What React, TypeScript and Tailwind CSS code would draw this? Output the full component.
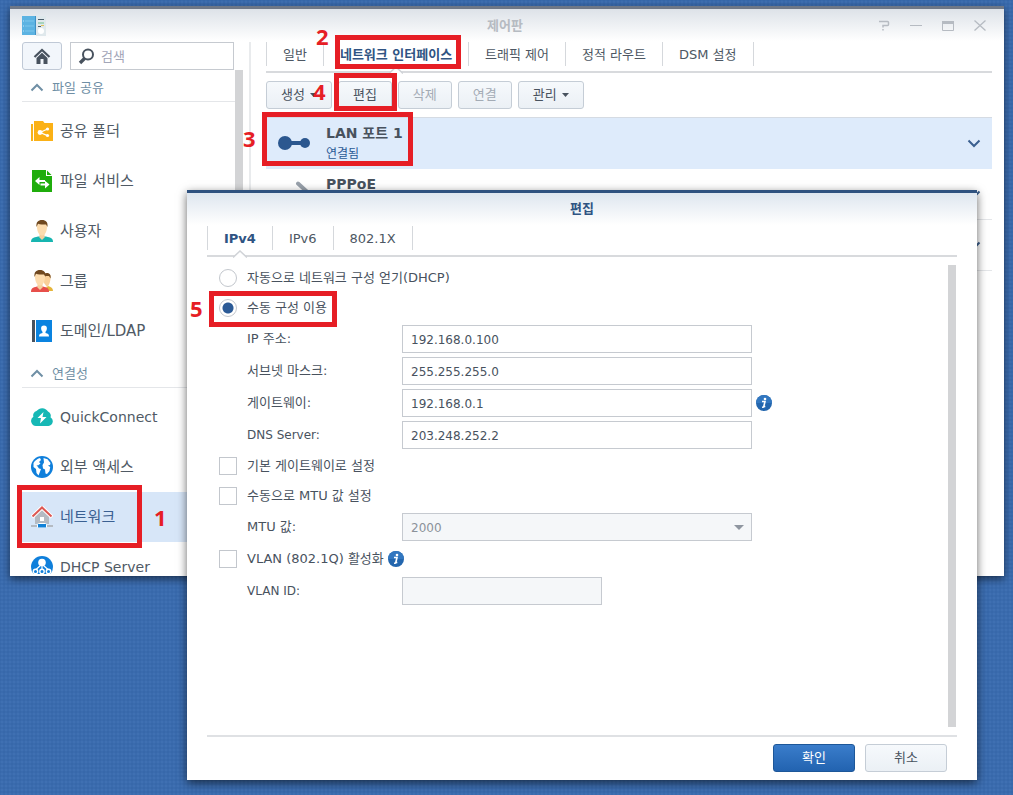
import { useState, type ReactNode } from "react";

/* ---------- icons ---------- */

function AppIcon() {
  return (
    <svg width="24" height="20" viewBox="0 0 24 20" aria-hidden="true">
      <rect x="14" y="0" width="10" height="20" fill="#dfe8ec" />
      <rect x="0" y="0" width="14" height="19" fill="#5cb3e2" />
      <rect x="13" y="0" width="1" height="19" fill="#3f90c4" />
      <path d="M3 5h9M3 10h9M3 15h9" stroke="#7cc6ec" />
      <path d="M1 5h1M1 10h1M1 15h1" stroke="#c5e8fa" />
      <path d="M16 3.500h6M16 10.500h3" stroke="#4a5d6b" />
      <path d="M16 7h6" stroke="#6fbf8f" />
      <path d="M19 9.500h3" stroke="#e2c25a" />
      <circle cx="19" cy="15" r="3" fill="#fff" />
    </svg>
  );
}

function HomeIcon() {
  return (
    <svg width="18" height="17" viewBox="0 0 18 17" aria-hidden="true">
      <path d="M1.500 9 9 2l7.500 7" fill="none" stroke="#48525e" strokeWidth="2.200" />
      <path d="M9 4.800 3.500 10v6H7.500v-5h3v5h4v-6z" fill="#48525e" />
    </svg>
  );
}

function SearchIcon() {
  return (
    <svg width="17" height="17" viewBox="0 0 17 17" aria-hidden="true">
      <circle cx="10" cy="6.500" r="5" fill="none" stroke="#48525e" strokeWidth="2" />
      <path d="M6.500 10.500 2 15" stroke="#48525e" strokeWidth="3.400" />
    </svg>
  );
}

function Chevron({ up = false, className = "" }: { up?: boolean; className?: string }) {
  return (
    <svg width="14" height="9" viewBox="0 0 14 9" className={className} aria-hidden="true">
      <path d={up ? "M1.500 7.500 7 2l5.500 5.500" : "M1.500 1.500 7 7l5.500-5.500"} fill="none" stroke="currentColor" strokeWidth="2" />
    </svg>
  );
}

function SharedFolderIcon() {
  return (
    <svg width="22" height="22" viewBox="0 0 22 22" aria-hidden="true">
      <path d="M0 4h2v17H0z" fill="#f6b21b" />
      <path d="M3 1h9l1.500 2H22v18H3z" fill="#fbb116" />
      <path d="M9 12.500 16.500 9M9 12.500l7.500 3.200" stroke="#fff" strokeWidth="1.300" />
      <circle cx="9" cy="12.500" r="2.400" fill="#fff" />
      <circle cx="16.500" cy="9" r="1.600" fill="#fff" />
      <circle cx="16.500" cy="15.500" r="1.600" fill="#fff" />
    </svg>
  );
}

function FileServiceIcon() {
  return (
    <svg width="22" height="22" viewBox="0 0 22 22" aria-hidden="true">
      <path d="M1 0h14v6h6v16H1z" fill="#1fad0c" />
      <path d="M16 0.500 20.500 5H16z" fill="#1fad0c" />
      <path d="M4 11l4.500-4v3H14v2H8.500v3zM18.500 14.500 14 10.800v2.700H9.500v2H14v3z" fill="#fff" />
    </svg>
  );
}

function UserIcon() {
  return (
    <svg width="22" height="22" viewBox="0 0 22 22" aria-hidden="true">
      <path d="M0 22c0-3.500 2-4.500 7-5.500h8c5 1 7 2 7 5.500z" fill="#17b5b0" />
      <path d="M8.500 13h5v4.500L11 20l-2.500-2.500z" fill="#f6cf9d" />
      <path d="M6 4h10c.6 6-1.500 11.500-5 11.500S5.400 10 6 4z" fill="#fddcae" />
      <path d="M5.500 7C5 2 7 0 11 0s6 2 5.500 7L15 4.500c-3 0-6 0-8-.8z" fill="#70481f" />
    </svg>
  );
}

function GroupIcon() {
  return (
    <svg width="22" height="22" viewBox="0 0 22 22" aria-hidden="true">
      <path d="M15 21c0-3 0-4 2-5 3 .8 5 2 5 5z" fill="#e5b53a" />
      <path d="M13 5h6.500c.5 5-1 10.500-3.500 12L13 13z" fill="#f9cf98" />
      <path d="M13 3.500c4-1.500 7.500 0 6.500 5l-1.500-2.500h-4z" fill="#70481f" />
      <path d="M0 22c0-3.500 1.500-4.500 6-5.500h6c4.500 1 6 2 6 5.500z" fill="#e74f4b" />
      <path d="M6.500 13h5v4.500L9 20l-2.500-2.500z" fill="#f6cf9d" />
      <path d="M4 4h10c.6 6-1.500 11.500-5 11.500S3.400 10 4 4z" fill="#fddcae" />
      <path d="M3.500 7C3 2 5 0 9 0s6 2 5.500 7L13 4.500c-3 0-6 0-8-.8z" fill="#70481f" />
    </svg>
  );
}

function DomainIcon() {
  return (
    <svg width="22" height="22" viewBox="0 0 22 22" aria-hidden="true">
      <path d="M1 0h3v22H1z" fill="#48525e" />
      <path d="M5 0h16v22H5z" fill="#0a83e0" />
      <path d="M13 5.500c2 0 3 1.200 2.900 3-.1 1.600-.7 2.700-1.400 3.300v1.300c2.400.5 3.500 1 3.500 3.400H8c0-2.400 1.100-2.900 3.500-3.400v-1.300c-.7-.6-1.300-1.700-1.400-3.300-.1-1.800.9-3 2.900-3z" fill="#fff" />
    </svg>
  );
}

function QuickConnectIcon() {
  return (
    <svg width="22" height="18" viewBox="0 0 22 18" aria-hidden="true">
      <path d="M5 18a5 5 0 0 1-2.600-9.200A4.500 4.500 0 0 1 5.500 3 7 7 0 0 1 17 3.500a4.500 4.500 0 0 1 2.500 5.800A4.700 4.700 0 0 1 17.500 18z" fill="#16b8b5" />
      <path d="m12.500 4-6 6h3.500l-1 5.500 6.500-6.500h-4z" fill="#fff" />
    </svg>
  );
}

function GlobeIcon() {
  return (
    <svg width="22" height="22" viewBox="0 0 22 22" aria-hidden="true">
      <circle cx="11" cy="11" r="11" fill="#0f7fdb" />
      <path d="M2.500 7C4 4.500 6 3 9 2l1 2-2 2 1.500 1.500L7 9.500 5.500 9l2.500 3.500 2 .5-1.500 4-1 2.500-2-2.500-.5-4-2.500-2z" fill="#fff" />
      <path d="m12.500 2 4 1.200L19.500 7l-.5 2-2 .5 2.200 1.500-.7 4-2.500 3-1.500-.5-.5-4-2-1-.5-3.500L13 6.500z" fill="#fff" />
    </svg>
  );
}

function NetworkIcon() {
  return (
    <svg width="22" height="22" viewBox="0 0 22 22" aria-hidden="true">
      <path d="M4 9.500 11 3.500l7 6V18H4z" fill="#b4bac2" />
      <rect x="9" y="11" width="4" height="4" fill="#fff" />
      <path d="M1 11 11 1.500 21 11" fill="none" stroke="#fff" strokeWidth="4" />
      <path d="M1.500 10.500 11 1.500l9.500 9" fill="none" stroke="#dd5752" strokeWidth="2" />
      <path d="M0 20h22" stroke="#b4bac2" strokeWidth="2" />
      <rect x="6.500" y="17.500" width="9" height="4.500" rx="1" fill="#1181d8" stroke="#fff" />
    </svg>
  );
}

function DhcpIcon() {
  return (
    <svg width="22" height="22" viewBox="0 0 22 22" aria-hidden="true">
      <circle cx="11" cy="11" r="11" fill="#0f7fdb" />
      <circle cx="11" cy="6.500" r="3.800" fill="#fff" />
      <path d="M11 9v6M10 9l-5.500 5M12 9l5.500 5" stroke="#fff" strokeWidth="1.200" />
      <g fill="#0f7fdb" stroke="#fff" strokeWidth="1.400">
        <circle cx="4.500" cy="15.500" r="2.200" />
        <circle cx="11" cy="15.500" r="2.200" />
        <circle cx="17.500" cy="15.500" r="2.200" />
      </g>
    </svg>
  );
}

function LinkUpIcon() {
  return (
    <svg width="32" height="14" viewBox="0 0 32 14" aria-hidden="true">
      <path d="M7 7h20" stroke="#2b578f" strokeWidth="4" />
      <circle cx="7" cy="7" r="7" fill="#2b578f" />
      <circle cx="27" cy="7" r="5" fill="#2b578f" />
    </svg>
  );
}

function LinkDownIcon() {
  return (
    <svg width="32" height="26" viewBox="0 0 32 26" aria-hidden="true">
      <path d="m20 2.500 11 10" stroke="#98a1ab" strokeWidth="4" strokeLinecap="round" />
      <path d="M2 22h10" stroke="#98a1ab" strokeWidth="4" strokeLinecap="round" />
    </svg>
  );
}

function InfoButton({ label }: { label: string }) {
  return (
    <button type="button" aria-label={label} className="size-4 shrink-0">
      <svg width="16" height="16" viewBox="0 0 16 16" aria-hidden="true">
        <circle cx="8" cy="8" r="8" fill="#2366ae" />
        <path d="M0 8a8 8 0 0 1 16 0z" fill="#3277c0" />
        <circle cx="9" cy="4" r="1.300" fill="#fff" />
        <path d="M6 6.500h3L7.800 11.500H9.300M6 12.300 8.200 12" fill="none" stroke="#fff" strokeWidth="1.600" />
      </svg>
    </button>
  );
}

function Caret() {
  return (
    <svg width="7" height="4" viewBox="0 0 7 4" aria-hidden="true">
      <path d="M0 0h7L3.500 4z" fill="#48525e" />
    </svg>
  );
}

/* ---------- shared parts ---------- */

type TabItem = { id: string; label: string };

function Tabs({ items, initial }: { items: TabItem[]; initial: string }) {
  const [active, setActive] = useState(initial);
  return (
    <div role="tablist" className="flex h-[31px] shrink-0 items-start border-b-2 border-[#d8dadd]">
      {items.map((tab) => (
        <button
          key={tab.id}
          type="button"
          role="tab"
          aria-selected={tab.id === active}
          onClick={() => setActive(tab.id)}
          className={
            "relative h-6 shrink-0 whitespace-nowrap border-l border-[#d5d8dc] px-4 text-[13px] leading-[26px] last:border-r " +
            (tab.id === active ? "font-bold text-[#2f5483]" : "text-[#4d5763]")
          }
        >
          {tab.label}
          {tab.id === active && (
            <svg width="14" height="8" viewBox="0 0 14 8" className="absolute left-1/2 top-6 -translate-x-1/2" aria-hidden="true">
              <path d="M0 8 7 1l7 7z" fill="#fff" />
              <path d="M0 7.500 7 1l7 6.500" fill="none" stroke="#d0d3d7" strokeWidth="1.500" />
            </svg>
          )}
        </button>
      ))}
    </div>
  );
}

function ToolButton({ children, disabled = false, menu = false }: { children: ReactNode; disabled?: boolean; menu?: boolean }) {
  return (
    <button
      type="button"
      disabled={disabled}
      className="flex h-7 items-center gap-[5px] rounded-[3px] border border-[#c5cdd6] bg-linear-to-b from-[#f6f9fc] to-[#ebf0f5] px-3.5 text-[13px] text-[#48525e] disabled:text-[#a3abb5]"
    >
      {children}
      {menu && <Caret />}
    </button>
  );
}

function NavSection({ title, children }: { title: string; children: ReactNode }) {
  return (
    <section>
      <button type="button" className="mt-1 flex h-7 w-full items-center gap-2 border-b border-[#e4e6e9] pl-2 text-[13px] text-[#6f8fa5]">
        <Chevron up />
        {title}
      </button>
      <ul className="pt-1">{children}</ul>
    </section>
  );
}

function NavItem({ icon, label, latin = false, selected = false }: { icon: ReactNode; label: string; latin?: boolean; selected?: boolean }) {
  return (
    <li>
      <a
        href="#"
        aria-current={selected ? "page" : undefined}
        className={
          "flex h-[50px] items-center gap-[7px] whitespace-nowrap pl-[9px] " +
          (latin ? "text-sm " : "text-[15px] ") +
          (selected ? "bg-[#d7e6f8] text-[#3a6092]" : "text-[#505a65]")
        }
      >
        {icon}
        {label}
      </a>
    </li>
  );
}

function InterfaceRow({ icon, name, status, selected = false }: { icon?: ReactNode; name: string; status?: string; selected?: boolean }) {
  return (
    <li className={"flex h-[51px] items-center border-b pl-3 pr-[11px] " + (selected ? "border-[#deebfb] bg-[#deebfb]" : "border-[#e4e6e9]")}>
      <span className="flex w-12 shrink-0 items-center">{icon}</span>
      <div className="flex h-full flex-1 flex-col pt-1.5">
        <span className="text-sm font-bold leading-[18px] text-[#48525e]">{name}</span>
        <span className="text-xs leading-6 text-[#2b5a96]">{status}</span>
      </div>
      <button type="button" aria-label={name + " 펼치기"} className="text-[#3a5f8f]">
        <Chevron />
      </button>
    </li>
  );
}

const fieldClass =
  "h-7 border border-[#c6cad0] bg-white px-2 pt-0.5 text-xs text-[#48525e] outline-none disabled:bg-[#f5f7f9] disabled:text-[#8b929a] disabled:opacity-100";

function FieldRow({ id, label, latin = false, children }: { id: string; label: string; latin?: boolean; children: ReactNode }) {
  return (
    <div className="flex h-8 items-center pl-7">
      <label htmlFor={id} className={"w-[155px] shrink-0 " + (latin ? "text-xs" : "text-[13px]")}>
        {label}
      </label>
      {children}
    </div>
  );
}

function CheckRow({ label, children }: { label: string; children?: ReactNode }) {
  return (
    <div className="flex h-[30px] items-center gap-1">
      <label className="flex items-center gap-2.5 text-[13px]">
        <input type="checkbox" className="size-[18px] shrink-0 appearance-none border border-[#c3c7cd] bg-white checked:bg-[#2b5a96]" />
        {label}
      </label>
      {children}
    </div>
  );
}

function RadioRow({ label, checked, onSelect }: { label: string; checked: boolean; onSelect: () => void }) {
  return (
    <label className="flex h-[30px] items-center gap-2.5 text-[13px]">
      <input
        type="radio"
        name="ip-mode"
        checked={checked}
        onChange={onSelect}
        className="size-[18px] shrink-0 appearance-none rounded-full border border-[#c3c7cd] bg-white checked:bg-[radial-gradient(circle,#2b5a96_0_5px,#ffffff_6px)]"
      />
      {label}
    </label>
  );
}

/* ---------- windows ---------- */

function ControlPanel() {
  return (
    <main className="absolute bottom-[219px] left-2.5 right-[9px] top-1.5 flex flex-col border-t-[3px] border-[#6f7887] bg-white bg-[linear-gradient(#dde2e8,#ffffff_32px)] pb-0.5 shadow-[0_3px_8px_rgba(0,0,0,0.55)]">
      <header className="grid h-[33px] shrink-0 grid-cols-[1fr_auto_1fr] items-center pl-3 pr-4 text-[#b6bbc2]">
        <AppIcon />
        <h1 className="text-[13px] font-bold">제어판</h1>
        <div className="flex items-center justify-end gap-4">
          <button type="button" aria-label="도움말" className="size-4">
            <svg width="16" height="16" viewBox="0 0 16 16" fill="none" stroke="currentColor" aria-hidden="true">
              <path d="M3 3.500h8.500a1 1 0 0 1 1 1v2a1 1 0 0 1-1 1H7v2M7 11v1.500" strokeWidth="1.500" />
            </svg>
          </button>
          <button type="button" aria-label="최소화" className="size-4">
            <svg width="16" height="16" viewBox="0 0 16 16" stroke="currentColor" aria-hidden="true">
              <path d="M2 7.500h12" />
            </svg>
          </button>
          <button type="button" aria-label="최대화" className="size-4">
            <svg width="16" height="16" viewBox="0 0 16 16" fill="none" stroke="currentColor" aria-hidden="true">
              <path d="M2.500 4h11v8.500h-11z" />
              <path d="M2 4.500h12" strokeWidth="3" />
            </svg>
          </button>
          <button type="button" aria-label="닫기" className="size-4">
            <svg width="16" height="16" viewBox="0 0 16 16" stroke="currentColor" aria-hidden="true">
              <path d="m2.500 2.500 11 10m0-10-11 10" strokeWidth="1.300" />
            </svg>
          </button>
        </div>
      </header>

      <div className="flex min-h-0 flex-1">
        <aside className="flex w-[239px] shrink-0 flex-col pl-3">
          <div className="flex h-7 shrink-0 gap-2 pr-[15px]">
            <button type="button" aria-label="홈" className="flex w-10 items-center justify-center rounded-[3px] border border-[#c0c9d6] bg-[#f2f6fb]">
              <HomeIcon />
            </button>
            <div className="relative flex-1">
              <span className="absolute left-2 top-1.5">
                <SearchIcon />
              </span>
              <input
                type="search"
                aria-label="검색"
                placeholder="검색"
                className="h-7 w-full border border-[#c6cad0] bg-white pl-[30px] pr-2 text-[13px] outline-none placeholder:text-[#a3a6b8]"
              />
            </div>
          </div>
          <div className="flex min-h-0 flex-1">
            <nav className="min-w-0 flex-1 overflow-hidden">
              <NavSection title="파일 공유">
                <NavItem icon={<SharedFolderIcon />} label="공유 폴더" />
                <NavItem icon={<FileServiceIcon />} label="파일 서비스" />
                <NavItem icon={<UserIcon />} label="사용자" />
                <NavItem icon={<GroupIcon />} label="그룹" />
                <NavItem icon={<DomainIcon />} label="도메인/LDAP" />
              </NavSection>
              <NavSection title="연결성">
                <NavItem icon={<QuickConnectIcon />} label="QuickConnect" latin />
                <NavItem icon={<GlobeIcon />} label="외부 액세스" />
                <NavItem icon={<NetworkIcon />} label="네트워크" selected />
                <NavItem icon={<DhcpIcon />} label="DHCP Server" latin />
              </NavSection>
            </nav>
            <div className="mr-1.5 w-2 bg-[#d3d4d6]" />
          </div>
        </aside>

        <section className="min-w-0 flex-1 border-l-2 border-[#e9ebed] pl-[15px] pr-3">
          <Tabs
            initial="interface"
            items={[
              { id: "general", label: "일반" },
              { id: "interface", label: "네트워크 인터페이스" },
              { id: "traffic", label: "트래픽 제어" },
              { id: "route", label: "정적 라우트" },
              { id: "dsm", label: "DSM 설정" },
            ]}
          />
          <div className="flex gap-1.5 py-2">
            <ToolButton menu>생성</ToolButton>
            <ToolButton>편집</ToolButton>
            <ToolButton disabled>삭제</ToolButton>
            <ToolButton disabled>연결</ToolButton>
            <ToolButton menu>관리</ToolButton>
          </div>
          <ul className="border-t border-[#d5dbe3]">
            <InterfaceRow icon={<LinkUpIcon />} name="LAN 포트 1" status="연결됨" selected />
            <InterfaceRow icon={<LinkDownIcon />} name="PPPoE" />
            <InterfaceRow name="" />
          </ul>
        </section>
      </div>
    </main>
  );
}

function EditDialog() {
  const [mode, setMode] = useState<"dhcp" | "manual">("manual");
  return (
    <div
      role="dialog"
      aria-labelledby="edit-title"
      className="absolute bottom-[15px] left-[187px] right-9 top-[190px] flex flex-col border-t-[3px] border-[#2f527f] bg-white bg-[linear-gradient(#dee6ef,#ffffff_32px)] px-5 shadow-[0_3px_9px_rgba(0,0,0,0.6)]"
    >
      <h2 id="edit-title" className="h-[33px] shrink-0 text-center text-[13px] font-bold leading-8 text-[#2f5483]">
        편집
      </h2>
      <Tabs
        initial="ipv4"
        items={[
          { id: "ipv4", label: "IPv4" },
          { id: "ipv6", label: "IPv6" },
          { id: "8021x", label: "802.1X" },
        ]}
      />
      <form className="flex min-h-0 flex-1 flex-col text-[#48525e]">
        <div className="flex min-h-0 flex-1 pb-2 pt-1.5">
          <div className="min-w-0 flex-1 overflow-hidden pl-3">
            <RadioRow label="자동으로 네트워크 구성 얻기(DHCP)" checked={mode === "dhcp"} onSelect={() => setMode("dhcp")} />
            <RadioRow label="수동 구성 이용" checked={mode === "manual"} onSelect={() => setMode("manual")} />
            <FieldRow id="ip" label="IP 주소:">
              <input id="ip" defaultValue="192.168.0.100" className={fieldClass + " w-[350px]"} />
            </FieldRow>
            <FieldRow id="mask" label="서브넷 마스크:">
              <input id="mask" defaultValue="255.255.255.0" className={fieldClass + " w-[350px]"} />
            </FieldRow>
            <FieldRow id="gateway" label="게이트웨이:">
              <input id="gateway" defaultValue="192.168.0.1" className={fieldClass + " mr-1 w-[350px]"} />
              <InfoButton label="게이트웨이 정보" />
            </FieldRow>
            <FieldRow id="dns" label="DNS Server:" latin>
              <input id="dns" defaultValue="203.248.252.2" className={fieldClass + " w-[350px]"} />
            </FieldRow>
            <CheckRow label="기본 게이트웨이로 설정" />
            <CheckRow label="수동으로 MTU 값 설정" />
            <FieldRow id="mtu" label="MTU 값:">
              <div className="relative">
                <select id="mtu" disabled className={fieldClass + " w-[350px] appearance-none"}>
                  <option>2000</option>
                </select>
                <svg width="10" height="5" viewBox="0 0 10 5" className="pointer-events-none absolute right-2 top-3" aria-hidden="true">
                  <path d="M0 0h10L5 5z" fill="#8f96a0" />
                </svg>
              </div>
            </FieldRow>
            <div className="py-px">
              <CheckRow label="VLAN (802.1Q) 활성화">
                <InfoButton label="VLAN 정보" />
              </CheckRow>
            </div>
            <FieldRow id="vlan" label="VLAN ID:" latin>
              <input id="vlan" disabled className={fieldClass + " w-[200px]"} />
            </FieldRow>
          </div>
          <div className="mr-px mt-0.5 w-2 bg-[#d3d4d6]" />
        </div>
        <footer className="flex h-[45px] shrink-0 justify-end gap-2.5 border-t-2 border-[#dfe1e4] pr-2.5 pt-[7px]">
          <button
            type="button"
            className="h-7 w-[82px] rounded-[3px] border border-[#1d5799] bg-linear-to-b from-[#3a7dcb] to-[#2263b0] text-[13px] text-white"
          >
            확인
          </button>
          <button
            type="button"
            className="h-7 w-[82px] rounded-[3px] border border-[#c5cdd6] bg-linear-to-b from-[#f6f9fc] to-[#ebf0f5] text-[13px] text-[#48525e]"
          >
            취소
          </button>
        </footer>
      </form>
    </div>
  );
}

/* ---------- numbered guide marks ---------- */

const marks = [
  { n: 1, box: "left-[17px] top-[485px] w-[125px] h-[63px]", num: "left-[154px] top-[507px]" },
  { n: 2, box: "left-[335px] top-[35px] w-[126px] h-[34px]", num: "left-[316px] top-[26px]" },
  { n: 3, box: "left-[262px] top-[112px] w-[151px] h-[54px]", num: "left-[243px] top-[128px]" },
  { n: 4, box: "left-[334px] top-[73px] w-[63px] h-[38px]", num: "left-[313px] top-[81px]" },
  { n: 5, box: "left-[209px] top-[291px] w-[128px] h-[36px]", num: "left-[190px] top-[298px]" },
];

export default function App() {
  return (
    <div className="relative min-h-screen overflow-hidden bg-[#3768aa] bg-[radial-gradient(circle,#3f70b2_1px,transparent_2px)] bg-[size:4px_4px] font-['DejaVu_Sans','Noto_Sans_CJK_KR',sans-serif]">
      <ControlPanel />
      <EditDialog />
      <div className="pointer-events-none font-['Noto_Sans',sans-serif] text-[22px] font-bold leading-5 text-[#e61e25]">
        {marks.map((m) => (
          <div key={m.n}>
            <div className={"absolute border-5 border-[#e61e25] " + m.box} />
            <span className={"absolute " + m.num}>{m.n}</span>
          </div>
        ))}
      </div>
    </div>
  );
}
